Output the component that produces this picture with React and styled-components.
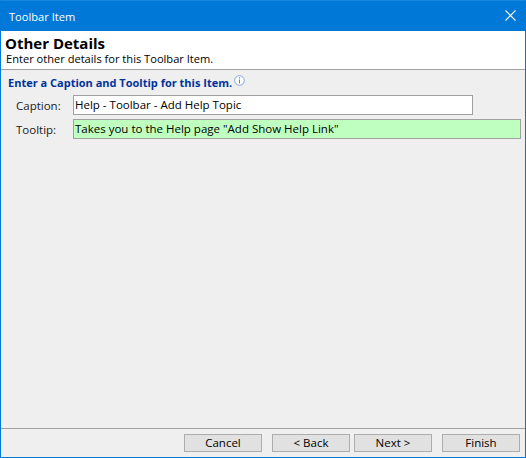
import React from 'react';
import styled, { createGlobalStyle } from 'styled-components';

const GlobalStyle = createGlobalStyle`
  html, body {
    margin: 0;
    padding: 0;
    background: #efefef;
  }
  body {
    font-family: "Open Sans", "Liberation Sans", sans-serif;
    font-size: 12px;
    color: #000;
  }
`;

const Window = styled.div`
  width: 526px;
  height: 458px;
  box-sizing: border-box;
  border: 1px solid #0078d7;
  border-top-color: #1a86dc;
  display: flex;
  flex-direction: column;
  background: #efefef;
`;

const TitleBar = styled.div`
  height: 30px;
  flex: none;
  background: #0078d7;
  color: #fff;
  display: flex;
  align-items: center;
  justify-content: space-between;
  padding: 0 9px 0 8px;
  font-size: 11.1px;
`;

const CloseIcon = styled.svg`
  width: 11px;
  height: 11px;
  margin-bottom: 2px;
  display: block;
`;

const Header = styled.div`
  height: 39px;
  flex: none;
  box-sizing: border-box;
  background: #fff;
  border-bottom: 1px solid #a0a0a0;
  padding: 4px 4px 0;
`;

const HeaderTitle = styled.div`
  font-size: 15px;
  font-weight: 700;
  line-height: 16px;
`;

const HeaderText = styled.div`
  font-size: 11.1px;
  line-height: 15px;
  padding-left: 1px;
`;

const Body = styled.div`
  flex: 1;
  padding: 5px 4px 0 7px;
`;

const SectionTitle = styled.div`
  display: flex;
  align-items: flex-start;
  gap: 2px;
  color: #003399;
  font-weight: 700;
  font-size: 11px;
  line-height: 16px;
  margin-bottom: 4px;
`;

const InfoIcon = styled.svg`
  width: 11px;
  height: 11px;
  display: block;
`;

const Row = styled.div`
  display: flex;
  align-items: center;
  height: 20px;
  margin-bottom: 4px;
`;

const Label = styled.label`
  width: 65px;
  flex: none;
  padding-left: 8px;
  box-sizing: border-box;
  font-size: 11.5px;
  color: #1a1a1a;
`;

const Field = styled.div`
  height: 20px;
  box-sizing: border-box;
  width: ${p => p.$width}px;
  border: 1px solid #a0a0a0;
  background: ${p => p.$bg};
  padding-left: 1px;
  font-size: 11.5px;
  line-height: 18px;
  white-space: nowrap;
`;

const Footer = styled.div`
  height: 29px;
  flex: none;
  box-sizing: border-box;
  border-top: 1px solid #a0a0a0;
  display: flex;
  align-items: flex-start;
  padding: 5px 5px 0 183px;
`;

const Button = styled.button`
  width: 78px;
  height: 18px;
  box-sizing: border-box;
  padding: 0;
  margin-left: ${p => p.$gap}px;
  border: 1px solid #adadad;
  background: #e1e1e1;
  color: #000;
  font-family: inherit;
  font-size: 11.5px;
  line-height: 16px;
`;

export default function App() {
  return (
    <>
      <GlobalStyle />
      <Window>
        <TitleBar>
          <span>Toolbar Item</span>
          <CloseIcon viewBox="0 0 11 11">
            <path d="M0.5 0.5L10.5 10.5M10.5 0.5L0.5 10.5" stroke="#fff" strokeWidth="1.1" fill="none" />
          </CloseIcon>
        </TitleBar>
        <Header>
          <HeaderTitle>Other Details</HeaderTitle>
          <HeaderText>Enter other details for this Toolbar Item.</HeaderText>
        </Header>
        <Body>
          <SectionTitle>
            <span>Enter a Caption and Tooltip for this Item.</span>
            <InfoIcon viewBox="0 0 11 11">
              <circle cx="5.5" cy="5.5" r="4.8" fill="#fff" stroke="#7fa6d6" strokeWidth="1" />
              <path d="M5.5 2.4v1.2M5.5 4.6v3.8" stroke="#5a7fb5" strokeWidth="1" fill="none" />
            </InfoIcon>
          </SectionTitle>
          <Row>
            <Label>Caption:</Label>
            <Field $width={400} $bg="#fff">Help - Toolbar - Add Help Topic</Field>
          </Row>
          <Row>
            <Label>Tooltip:</Label>
            <Field $width={448} $bg="#bfffbf">Takes you to the Help page "Add Show Help Link"</Field>
          </Row>
        </Body>
        <Footer>
          <Button $gap={0}>Cancel</Button>
          <Button $gap={10}>&lt; Back</Button>
          <Button $gap={4}>Next &gt;</Button>
          <Button $gap={10}>Finish</Button>
        </Footer>
      </Window>
    </>
  );
}
